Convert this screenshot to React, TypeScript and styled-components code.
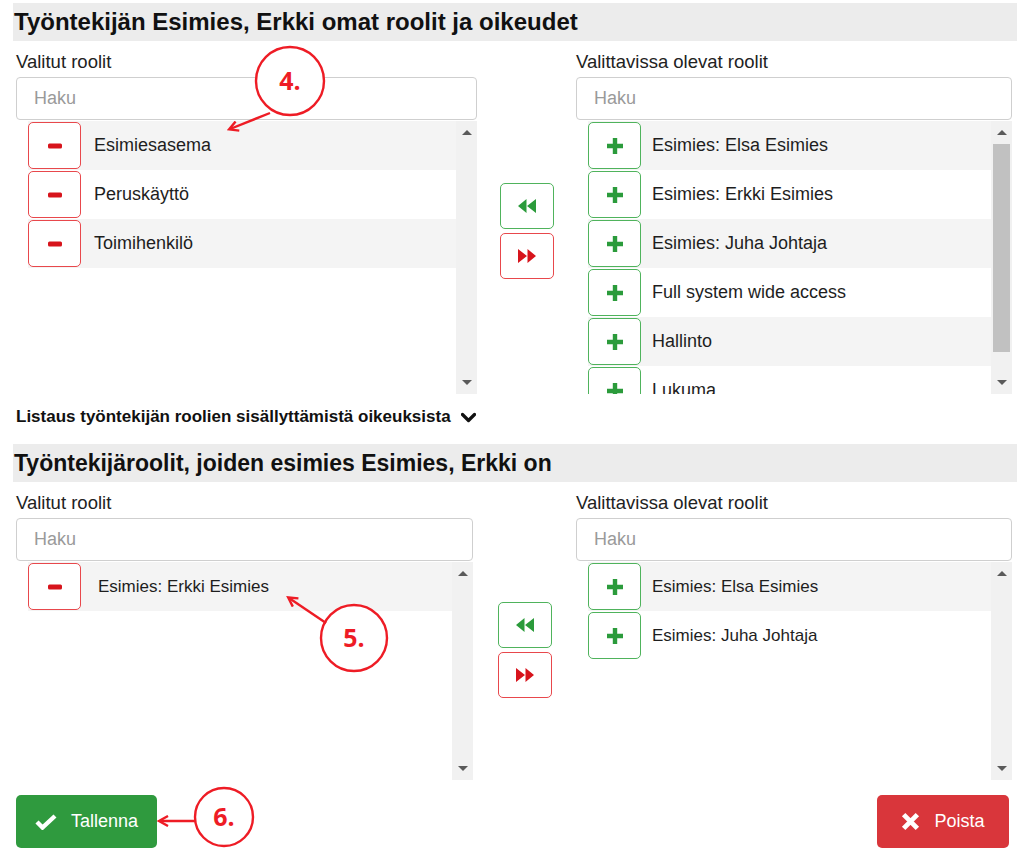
import React from 'react';
import styled, { createGlobalStyle } from 'styled-components';

const GlobalStyle = createGlobalStyle`
  html, body {
    margin: 0;
    padding: 0;
    background: #fff;
  }
  body {
    font-family: "Liberation Sans", Arial, sans-serif;
    color: #222;
  }
  * {
    box-sizing: border-box;
  }
`;

const RED = '#d7141c';
const GREEN = '#2b9b3b';

type Role = { name: string };

const MinusIcon = () => (
  <svg width="14" height="6" viewBox="0 0 14 6">
    <rect x="0" y="0.5" width="14" height="5" rx="1.5" fill={RED} />
  </svg>
);

const PlusIcon = () => (
  <svg width="16" height="16" viewBox="0 0 16 16">
    <path d="M5.8 0h4.4v5.8H16v4.4h-5.8V16H5.8v-5.8H0V5.8h5.8z" fill={GREEN} />
  </svg>
);

const BackwardIcon = () => (
  <svg width="18" height="14" viewBox="0 0 18 14">
    <path d="M0 7L8.5 0v14zM9 7l9-7v14z" fill={GREEN} />
  </svg>
);

const ForwardIcon = () => (
  <svg width="18" height="14" viewBox="0 0 18 14">
    <path d="M18 7L9.5 0v14zM9 7L0 0v14z" fill={RED} />
  </svg>
);

const ChevronDown = () => (
  <svg width="15" height="11" viewBox="0 0 15 11">
    <path d="M1.5 2.5l6 6 6-6" stroke="#111" strokeWidth="3.2" fill="none" strokeLinecap="round" strokeLinejoin="round" />
  </svg>
);

const CheckIcon = () => (
  <svg width="22" height="17" viewBox="0 0 22 17">
    <path d="M2 9l5.5 5.5L20 3" stroke="#fff" strokeWidth="4.4" fill="none" strokeLinejoin="miter" />
  </svg>
);

const TimesIcon = () => (
  <svg width="19" height="19" viewBox="0 0 18 18">
    <path d="M2.5 2.5l13 13M15.5 2.5l-13 13" stroke="#fff" strokeWidth="4.6" />
  </svg>
);

function RoleList({
  roles,
  kind,
  height,
  textSize,
  textGap,
  thumb,
}: {
  roles: Role[];
  kind: 'remove' | 'add';
  height: number;
  textSize: number;
  textGap: number;
  thumb?: number;
}) {
  return (
    <ListBox $height={height}>
      <Rows>
        {roles.map((r, i) => (
          <Row key={r.name} $alt={i % 2 === 0}>
            <RowButton $kind={kind}>{kind === 'remove' ? <MinusIcon /> : <PlusIcon />}</RowButton>
            <RowText $size={textSize} $gap={textGap}>
              {r.name}
            </RowText>
          </Row>
        ))}
      </Rows>
      <Scrollbar>
        <ScrollArrow>
          <ArrowUp />
        </ScrollArrow>
        <Track>{thumb ? <Thumb $height={thumb} /> : null}</Track>
        <ScrollArrow>
          <ArrowDown />
        </ScrollArrow>
      </Scrollbar>
    </ListBox>
  );
}

function Picker({
  leftWidth,
  selected,
  available,
  height,
  textSize,
  selectedGap,
  moveOffset,
  thumb,
}: {
  leftWidth: number;
  selected: Role[];
  available: Role[];
  height: number;
  textSize: number;
  selectedGap: number;
  moveOffset: number;
  thumb?: number;
}) {
  return (
    <Columns $left={leftWidth}>
      <Column>
        <Label>Valitut roolit</Label>
        <SearchInput placeholder="Haku" />
        <RoleList roles={selected} kind="remove" height={height} textSize={textSize} textGap={selectedGap} />
      </Column>
      <MoveButtons $offset={moveOffset}>
        <MoveButton $kind="add">
          <BackwardIcon />
        </MoveButton>
        <MoveButton $kind="remove">
          <ForwardIcon />
        </MoveButton>
      </MoveButtons>
      <Column>
        <Label>Valittavissa olevat roolit</Label>
        <SearchInput placeholder="Haku" />
        <RoleList roles={available} kind="add" height={height} textSize={textSize} textGap={11} thumb={thumb} />
      </Column>
    </Columns>
  );
}

export default function App() {
  return (
    <Page>
      <GlobalStyle />
      <SectionHeader $size={24}>Työntekijän Esimies, Erkki omat roolit ja oikeudet</SectionHeader>
      <Content>
        <Picker
          leftWidth={461}
          height={273}
          textSize={18}
          selectedGap={13}
          moveOffset={62}
          thumb={208}
          selected={[{ name: 'Esimiesasema' }, { name: 'Peruskäyttö' }, { name: 'Toimihenkilö' }]}
          available={[
            { name: 'Esimies: Elsa Esimies' },
            { name: 'Esimies: Erkki Esimies' },
            { name: 'Esimies: Juha Johtaja' },
            { name: 'Full system wide access' },
            { name: 'Hallinto' },
            { name: 'Lukuma' },
          ]}
        />
        <Toggle>
          Listaus työntekijän roolien sisällyttämistä oikeuksista
          <ChevronDown />
        </Toggle>
      </Content>
      <SectionHeader $size={23} $top={16}>
        Työntekijäroolit, joiden esimies Esimies, Erkki on
      </SectionHeader>
      <Content>
        <Picker
          leftWidth={457}
          height={218}
          textSize={17}
          selectedGap={17}
          moveOffset={40}
          selected={[{ name: 'Esimies: Erkki Esimies' }]}
          available={[{ name: 'Esimies: Elsa Esimies' }, { name: 'Esimies: Juha Johtaja' }]}
        />
        <Footer>
          <ActionButton $color="#2f9a3e" $width={141}>
            <CheckIcon />
            Tallenna
          </ActionButton>
          <ActionButton $color="#d9363b" $width={132}>
            <TimesIcon />
            Poista
          </ActionButton>
        </Footer>
      </Content>

      <Annotations width="1024" height="861" viewBox="0 0 1024 861">
        <defs>
          <marker id="head" markerWidth="12" markerHeight="12" refX="9" refY="6" orient="auto" markerUnits="userSpaceOnUse">
            <path d="M1 1L10 6L1 11" stroke="#ee1c25" strokeWidth="2.4" fill="none" />
          </marker>
        </defs>
        <circle cx="290" cy="81" r="34" />
        <text x="290" y="90">4.</text>
        <line x1="270" y1="113" x2="230" y2="129" markerEnd="url(#head)" />

        <circle cx="354" cy="638" r="33" />
        <text x="354" y="647">5.</text>
        <line x1="326" y1="623" x2="289" y2="598" markerEnd="url(#head)" />

        <circle cx="224" cy="817" r="29" />
        <text x="224" y="826">6.</text>
        <line x1="195" y1="821" x2="160" y2="821" markerEnd="url(#head)" />
      </Annotations>
    </Page>
  );
}

const Page = styled.div`
  position: relative;
  width: 1024px;
  height: 861px;
  padding: 3px 7px 0 13px;
  overflow: hidden;
`;

const SectionHeader = styled.h2<{ $top?: number; $size: number }>`
  margin: ${({ $top }) => $top ?? 0}px 0 0;
  height: 38px;
  padding-left: 1px;
  background: #ececec;
  font-size: ${({ $size }) => $size}px;
  font-weight: 700;
  line-height: 38px;
  color: #111;
  white-space: nowrap;
`;

const Content = styled.div`
  padding: 0 5px 0 3px;
`;

const Columns = styled.div<{ $left: number }>`
  display: grid;
  grid-template-columns: ${({ $left }) => $left}px 1fr 436px;
  margin-top: 10px;
`;

const Column = styled.div`
  display: flex;
  flex-direction: column;
`;

const Label = styled.div`
  font-size: 18.5px;
  line-height: 22px;
  margin-bottom: 4px;
  color: #222;
`;

const SearchInput = styled.input`
  height: 43px;
  width: 100%;
  padding: 0 17px;
  border: 1px solid #cfcfcf;
  border-radius: 4px;
  font-family: inherit;
  font-size: 18px;
  color: #333;
  outline: none;

  &::placeholder {
    color: #9a9a9a;
  }
`;

const ListBox = styled.div<{ $height: number }>`
  display: flex;
  height: ${({ $height }) => $height}px;
  margin-top: 1px;
  overflow: hidden;
`;

const Rows = styled.div`
  flex: 1;
  padding-left: 12px;
  overflow: hidden;
`;

const Row = styled.div<{ $alt: boolean }>`
  display: flex;
  align-items: center;
  height: 49px;
  background: ${({ $alt }) => ($alt ? '#f4f4f4' : '#fff')};
`;

const RowButton = styled.div<{ $kind: 'remove' | 'add' }>`
  display: flex;
  align-items: center;
  justify-content: center;
  flex: 0 0 auto;
  width: 53px;
  height: 47px;
  border: 1px solid ${({ $kind }) => ($kind === 'remove' ? '#e8484c' : '#4fb35c')};
  border-radius: 5px;
  background: #fff;
`;

const RowText = styled.span<{ $size: number; $gap: number }>`
  margin-left: ${({ $gap }) => $gap}px;
  font-size: ${({ $size }) => $size}px;
  color: #1e1e1e;
  white-space: nowrap;
`;

const Scrollbar = styled.div`
  display: flex;
  flex-direction: column;
  width: 21px;
  background: #f1f1f1;
`;

const ScrollArrow = styled.div`
  display: flex;
  align-items: center;
  justify-content: center;
  height: 23px;
`;

const ArrowUp = styled.div`
  width: 0;
  height: 0;
  border-left: 5px solid transparent;
  border-right: 5px solid transparent;
  border-bottom: 5px solid #5a5a5a;
`;

const ArrowDown = styled(ArrowUp)`
  border-bottom: none;
  border-top: 5px solid #5a5a5a;
`;

const Track = styled.div`
  flex: 1;
  padding: 0 2px;
`;

const Thumb = styled.div<{ $height: number }>`
  height: ${({ $height }) => $height}px;
  background: #c1c1c1;
`;

const MoveButtons = styled.div<{ $offset: number }>`
  display: flex;
  flex-direction: column;
  align-items: center;
  gap: 4px;
  padding-top: ${({ $offset }) => $offset + 70}px;
`;

const MoveButton = styled.div<{ $kind: 'remove' | 'add' }>`
  display: flex;
  align-items: center;
  justify-content: center;
  width: 54px;
  height: 46px;
  border: 1px solid ${({ $kind }) => ($kind === 'remove' ? '#e8484c' : '#4fb35c')};
  border-radius: 5px;
  background: #fff;
`;

const Toggle = styled.div`
  display: flex;
  align-items: center;
  gap: 10px;
  margin-top: 12px;
  font-size: 17px;
  font-weight: 700;
  line-height: 22px;
  color: #111;
`;

const Footer = styled.div`
  display: flex;
  justify-content: space-between;
  margin-top: 15px;
  padding-right: 3px;
`;

const ActionButton = styled.div<{ $color: string; $width: number }>`
  display: flex;
  align-items: center;
  justify-content: center;
  gap: 14px;
  width: ${({ $width }) => $width}px;
  height: 53px;
  border-radius: 5px;
  background: ${({ $color }) => $color};
  color: #fff;
  font-size: 18px;
`;

const Annotations = styled.svg`
  position: absolute;
  left: 0;
  top: 0;
  pointer-events: none;

  circle {
    fill: #fff;
    stroke: #ee1c25;
    stroke-width: 2.4;
  }
  line {
    stroke: #ee1c25;
    stroke-width: 2.4;
  }
  text {
    fill: #ee1c25;
    font-family: "Open Sans", "Liberation Sans", sans-serif;
    font-weight: 700;
    font-size: 25px;
    text-anchor: middle;
  }
`;
